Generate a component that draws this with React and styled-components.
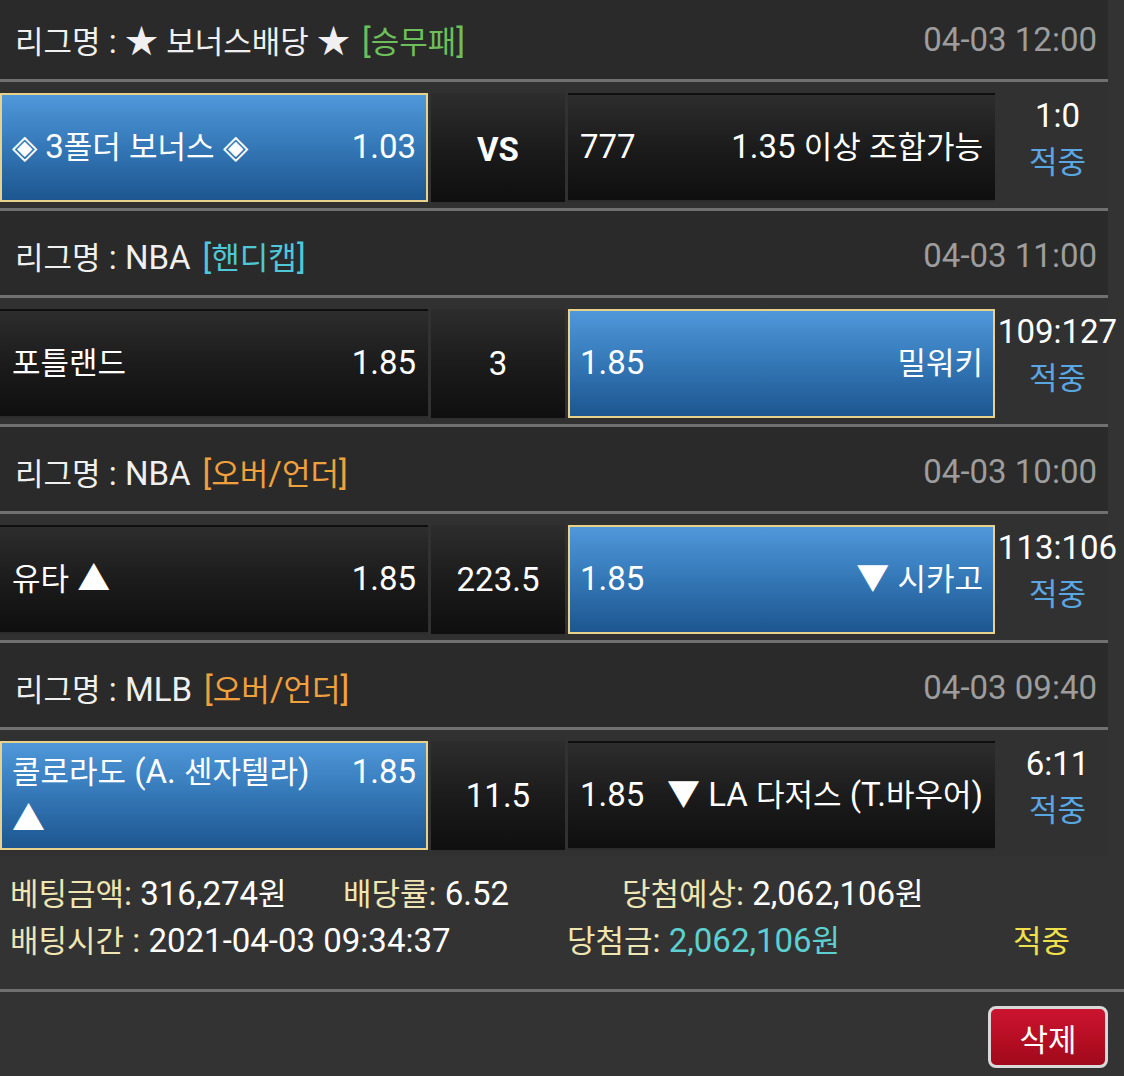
import React from 'react';
import styled, { createGlobalStyle } from 'styled-components';

const GlobalStyle = createGlobalStyle`
  body {
    margin: 0;
    background: #333;
    font-family: Roboto, "Noto Sans CJK KR", sans-serif;
    color: #f2f2f2;
  }
`;

const matches = [
  {
    league: '★ 보너스배당 ★',
    market: '[승무패]',
    marketColor: '#6cbf5a',
    time: '04-03 12:00',
    home: '◈ 3폴더 보너스 ◈',
    homeOdds: '1.03',
    mid: 'VS',
    away: '1.35 이상 조합가능',
    awayOdds: '777',
    pick: 'home',
    score: '1:0',
  },
  {
    league: 'NBA',
    market: '[핸디캡]',
    marketColor: '#4ec8d6',
    time: '04-03 11:00',
    home: '포틀랜드',
    homeOdds: '1.85',
    mid: '3',
    away: '밀워키',
    awayOdds: '1.85',
    pick: 'away',
    score: '109:127',
  },
  {
    league: 'NBA',
    market: '[오버/언더]',
    marketColor: '#f0a03c',
    time: '04-03 10:00',
    home: '유타',
    homeArrow: '▲',
    homeOdds: '1.85',
    mid: '223.5',
    away: '시카고',
    awayArrow: '▼',
    awayOdds: '1.85',
    pick: 'away',
    score: '113:106',
  },
  {
    league: 'MLB',
    market: '[오버/언더]',
    marketColor: '#f0a03c',
    time: '04-03 09:40',
    home: '콜로라도 (A. 센자텔라)',
    homeArrow: '▲',
    homeOdds: '1.85',
    mid: '11.5',
    away: 'LA 다저스 (T.바우어)',
    awayArrow: '▼',
    awayOdds: '1.85',
    pick: 'home',
    score: '6:11',
  },
];

// hangul in the original font is set a bit narrower than the latin text
const Ko = styled.span`
  font-size: 31px;
`;

const T = ({ children }) => {
  const parts = String(children).split(/([\uAC00-\uD7A3\u3131-\u318E]+)/);
  return parts.map((p, i) => (i % 2 ? <Ko key={i}>{p}</Ko> : p));
};

const Page = styled.div`
  width: 1124px;
  margin-top: -5px;
  font-size: 33px;
`;

const Match = styled.section`
  width: 1108px;
`;

const LeagueBar = styled.div`
  height: 80px;
  padding: 4px 11px 0 15px;
  display: flex;
  align-items: center;
  justify-content: space-between;
  background: #2a2a2a;
  border-bottom: 3px solid #707070;
`;

const League = styled.div`
  color: #f0f0f0;
  white-space: nowrap;
`;

const Market = styled.span`
  color: ${p => p.$color};
  margin-left: 12px;
`;

const Time = styled.div`
  color: #9d9d9d;
`;

const GameRow = styled.div`
  height: 105px;
  padding: 11px 0 10px;
  display: grid;
  grid-template-columns: 428px 134px 427px 113px;
  column-gap: 3px;
  background: #313131;
  border-bottom: ${p => (p.$last ? 'none' : '3px solid #707070')};
`;

const Pick = styled.div`
  box-sizing: border-box;
  padding: 0 10px;
  display: grid;
  grid-template-columns: ${p => (p.$away ? 'auto 1fr' : '1fr auto')};
  align-content: center;
  align-items: baseline;
  line-height: 46px;
  color: #fff;
  border: 2px solid ${p => (p.$selected ? '#e8d18a' : 'transparent')};
  background: ${p =>
    p.$selected
      ? 'linear-gradient(to bottom, #4f98da 0%, #3477b6 50%, #1d5690 100%)'
      : 'linear-gradient(to bottom, #2d2d2d 0%, #1a1a1a 55%, #0f0f0f 100%)'};
`;

const Name = styled.span`
  max-width: 330px;
  text-align: ${p => (p.$away ? 'right' : 'left')};
  justify-self: ${p => (p.$away ? 'end' : 'start')};
`;

const Arrow = styled.span`
  display: inline-block;
`;

const Odds = styled.span`
  white-space: nowrap;
  text-align: ${p => (p.$away ? 'left' : 'right')};
`;

const Mid = styled.div`
  display: flex;
  align-items: center;
  justify-content: center;
  padding-top: ${p => (p.$bold ? '3px' : '0')};
  font-weight: ${p => (p.$bold ? 700 : 400)};
  color: #fff;
  background: linear-gradient(to bottom, #2d2d2d 0%, #1a1a1a 55%, #0f0f0f 100%);
`;

const Result = styled.div`
  min-width: 0;
  display: flex;
  flex-direction: column;
  align-items: center;
  justify-content: center;
  padding: 0 0 16px 6px;
  line-height: 46px;
  white-space: nowrap;
`;

const Score = styled.span`
  color: #fff;
`;

const Hit = styled.span`
  color: ${p => p.$color || '#5aa6e2'};
`;

const Summary = styled.div`
  padding: 15px 10px 24px;
  border-bottom: 3px solid #707070;
  line-height: 46px;
`;

const SummaryLine = styled.div`
  display: flex;
  white-space: nowrap;
`;

const Field = styled.span`
  width: ${p => (p.$w ? `${p.$w}px` : 'auto')};
  flex-shrink: 0;
`;

const Label = styled.span`
  color: #efe5b2;
`;

const Value = styled.span`
  color: ${p => p.$color || '#fff'};
`;

const Actions = styled.div`
  display: flex;
  justify-content: flex-end;
  padding: 14px 16px 0 0;
`;

const DeleteButton = styled.button`
  width: 120px;
  height: 62px;
  box-sizing: border-box;
  border: 3px solid #d9d9d9;
  border-radius: 8px;
  background: linear-gradient(to bottom, #cc1430 0%, #b30d22 60%, #a00a1c 100%);
  color: #fff;
  font-family: inherit;
  font-size: 31px;
  padding: 0;
`;

const App = () => (
  <>
    <GlobalStyle />
    <Page>
      {matches.map((m, i) => (
        <Match key={i}>
          <LeagueBar>
            <League>
              <T>{`리그명 : ${m.league}`}</T>
              <Market $color={m.marketColor}><T>{m.market}</T></Market>
            </League>
            <Time>{m.time}</Time>
          </LeagueBar>
          <GameRow $last={i === matches.length - 1}>
            <Pick $selected={m.pick === 'home'}>
              <Name>
                <T>{m.home}</T>
                {m.homeArrow && <> <Arrow>{m.homeArrow}</Arrow></>}
              </Name>
              <Odds>{m.homeOdds}</Odds>
            </Pick>
            <Mid $bold={m.mid === 'VS'}>{m.mid}</Mid>
            <Pick $away $selected={m.pick === 'away'}>
              <Odds $away>{m.awayOdds}</Odds>
              <Name $away>
                {m.awayArrow && <><Arrow>{m.awayArrow}</Arrow> </>}
                <T>{m.away}</T>
              </Name>
            </Pick>
            <Result>
              <Score>{m.score}</Score>
              <Hit><T>적중</T></Hit>
            </Result>
          </GameRow>
        </Match>
      ))}
      <Summary>
        <SummaryLine>
          <Field $w={333}>
            <Label><T>베팅금액:</T></Label> <Value><T>316,274원</T></Value>
          </Field>
          <Field $w={279}>
            <Label><T>배당률:</T></Label> <Value>6.52</Value>
          </Field>
          <Field>
            <Label><T>당첨예상:</T></Label> <Value><T>2,062,106원</T></Value>
          </Field>
        </SummaryLine>
        <SummaryLine>
          <Field $w={557}>
            <Label><T>배팅시간 :</T></Label> <Value>2021-04-03 09:34:37</Value>
          </Field>
          <Field $w={446}>
            <Label><T>당첨금:</T></Label> <Value $color="#5cd0d0"><T>2,062,106원</T></Value>
          </Field>
          <Field>
            <Hit $color="#f0e04c"><T>적중</T></Hit>
          </Field>
        </SummaryLine>
      </Summary>
      <Actions>
        <DeleteButton>삭제</DeleteButton>
      </Actions>
    </Page>
  </>
);

export default App;
